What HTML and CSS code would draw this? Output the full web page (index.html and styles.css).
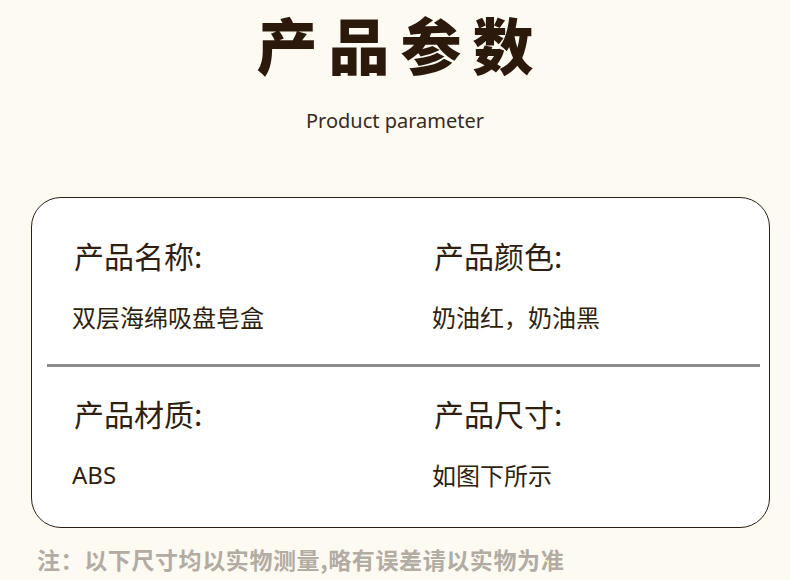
FILE: index.html
```html
<!DOCTYPE html>
<html lang="zh-CN">
<head>
    <meta charset="UTF-8">
    <meta name="viewport" content="width=device-width, initial-scale=1.0">
    <title>产品参数</title>
    <link rel="stylesheet" href="styles.css">
</head>
<body>
    <!-- Header -->
    <div class="head">
        <h1 class="title">产品参数</h1>
        <p class="subtitle">Product parameter</p>
    </div>

    <!-- Parameter card -->
    <div class="card">
        <div class="row">
            <div class="item">
                <div class="label">产品名称:</div>
                <div class="value">双层海绵吸盘皂盒</div>
            </div>
            <div class="item">
                <div class="label">产品颜色:</div>
                <div class="value">奶油红，奶油黑</div>
            </div>
        </div>
        <div class="divider"></div>
        <div class="row">
            <div class="item">
                <div class="label">产品材质:</div>
                <div class="value latin">ABS</div>
            </div>
            <div class="item">
                <div class="label">产品尺寸:</div>
                <div class="value">如图下所示</div>
            </div>
        </div>
    </div>

    <p class="note">注：以下尺寸均以实物测量,略有误差请以实物为准</p>
</body>
</html>
```

FILE: styles.css
```css
/* Basic page styling */
body {
    margin: 0;
    background-color: #fdfaf2;
    color: #2f1f10;
    font-family: "Noto Sans CJK SC", "Noto Sans", sans-serif;
}
.head {
    text-align: center;
}
.title {
    margin: 0;
    font-size: 61px;
    font-weight: 900;
    line-height: 88px;
    letter-spacing: 11px;
    padding-left: 11px;
    color: #2b1a0c;
}
.subtitle {
    margin: 20px 0 0;
    font-family: "Noto Sans", sans-serif;
    font-size: 20px;
    line-height: 26px;
    color: #3a2a1c;
}
/* Card */
.card {
    margin: 63px 20px 0 31px;
    background-color: #fff;
    border: 1px solid #2a2018;
    border-radius: 30px;
    height: 331px;
    box-sizing: border-box;
    padding-top: 36px;
}
.row {
    display: grid;
    grid-template-columns: 360px 1fr;
    padding-left: 42px;
}
.label {
    font-size: 30px;
    line-height: 42px;
}
.value {
    margin-top: 25px;
    font-size: 24px;
    line-height: 32px;
    margin-left: -2px;
}
.value.latin {
    font-family: "Noto Sans", sans-serif;
}
.divider {
    height: 3px;
    background-color: #8c8c8c;
    margin: 31px 9px 25px 15px;
}
.note {
    margin: 12px 0 0 37px;
    font-size: 23px;
    font-weight: bold;
    line-height: 38px;
    letter-spacing: 0.6px;
    color: #b2aca3;
}
```
